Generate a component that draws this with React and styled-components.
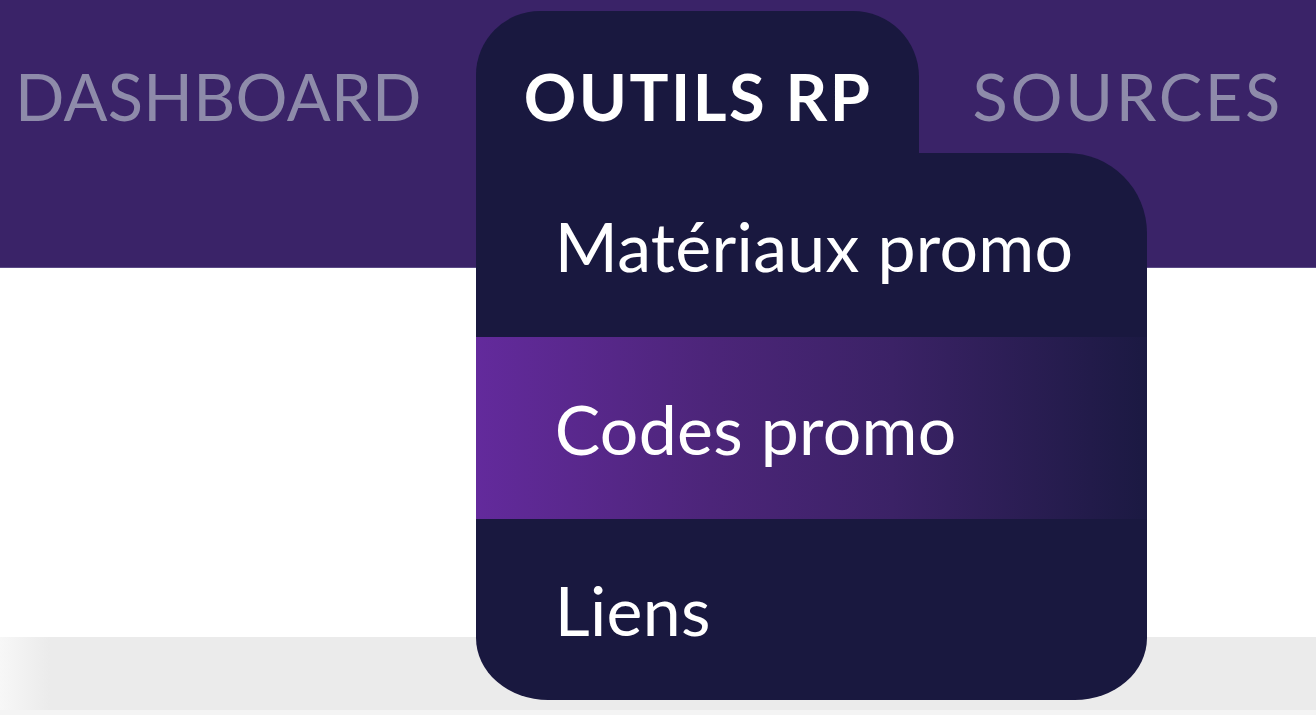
import styled, { createGlobalStyle } from 'styled-components'

// Style
const GlobalStyle = createGlobalStyle`
  html, body {
    margin: 0;
    padding: 0;
    background: #ffffff;
    overflow: hidden;
  }
  body {
    font-family: Lato, 'Open Sans', sans-serif;
  }
`
const Page = styled.div`
  width: 1316px;
  height: 715px;
  display: flex;
  flex-direction: column;
  background: #f4f4f4;
`
const Header = styled.header`
  height: 268px;
  flex-shrink: 0;
  background: #3a2368;
  border-bottom: 1px solid #5a4a86;
  box-sizing: border-box;
`
const Nav = styled.nav`
  display: flex;
  align-items: flex-start;
  gap: 54px;
  padding: 11px 0 0 15px;
`
const NavItem = styled.div`
  position: relative;
  height: 142px;
  display: flex;
  align-items: flex-start;
  padding: ${({ $active }) => ($active ? '0 46px 0 48px' : '0')};
  background: ${({ $active }) => ($active ? '#19183f' : 'transparent')};
  border-radius: 64px 66px 0 0;
`
const NavLabel = styled.span`
  display: block;
  margin-top: 53px;
  font-size: 65px;
  line-height: 1;
  font-weight: ${({ $active }) => ($active ? 700 : 400)};
  color: ${({ $active }) => ($active ? '#ffffff' : '#8e8baa')};
  letter-spacing: ${({ $spacing }) => $spacing}px;
  white-space: nowrap;
`
const Menu = styled.ul`
  position: absolute;
  top: 142px;
  left: 0;
  width: 671px;
  height: 547px;
  margin: 0;
  padding: 0;
  list-style: none;
  display: flex;
  flex-direction: column;
  background: #19183f;
  border-radius: 0 80px 72px 72px / 0 80px 62px 62px;
  overflow: hidden;
  z-index: 2;
`
const MenuItem = styled.li`
  height: ${({ $height }) => $height}px;
  flex-shrink: 0;
  display: flex;
  align-items: center;
  padding-left: 79px;
  font-size: 68px;
  letter-spacing: 0.3px;
  color: #ffffff;
  background: ${({ $highlight }) =>
    $highlight
      ? 'linear-gradient(90deg, #632a9c 0%, #4c2579 35%, #3b2266 62%, #1b1942 100%)'
      : 'transparent'};
`
const Content = styled.main`
  height: 369px;
  flex-shrink: 0;
  background: #ffffff;
`
const Band = styled.div`
  height: 73px;
  flex-shrink: 0;
  background: linear-gradient(90deg, #f7f7f7 0px, #ebebeb 50px, #ebebeb 100%);
`

const menuItems = [
  { label: 'Matériaux promo', height: 184 },
  { label: 'Codes promo', height: 182, highlight: true },
  { label: 'Liens', height: 181 },
]

// Component
function App() {
  return (
    <Page>
      <GlobalStyle />
      <Header>
        <Nav>
          <NavItem>
            <NavLabel $spacing={0.3}>DASHBOARD</NavLabel>
          </NavItem>
          <NavItem $active>
            <NavLabel $active $spacing={2.5}>
              OUTILS RP
            </NavLabel>
            <Menu>
              {menuItems.map((item) => (
                <MenuItem
                  key={item.label}
                  $height={item.height}
                  $highlight={item.highlight}
                >
                  {item.label}
                </MenuItem>
              ))}
            </Menu>
          </NavItem>
          <NavItem>
            <NavLabel $spacing={2.7}>SOURCES</NavLabel>
          </NavItem>
        </Nav>
      </Header>
      <Content />
      <Band />
    </Page>
  )
}

export default App
